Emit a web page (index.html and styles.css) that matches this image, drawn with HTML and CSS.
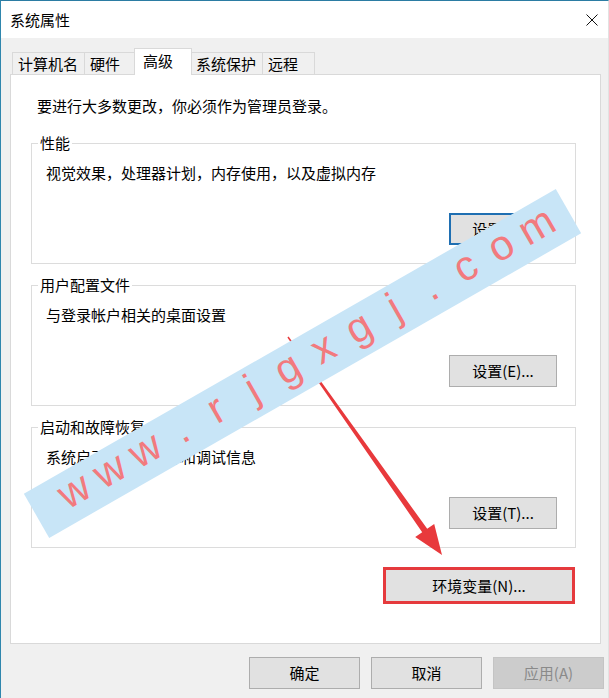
FILE: index.html
```html
<!DOCTYPE html>
<html lang="zh-CN">
<head>
  <meta charset="UTF-8" />
  <title>系统属性</title>
  <link rel="stylesheet" href="styles.css">
</head>
<body>

  <div class="window">
    <!-- 标题栏 -->
    <div class="titlebar">
      <span class="title">系统属性</span>
      <svg class="close" width="12" height="12" viewBox="0 0 12 12">
        <path d="M0.5 0.5 L11.5 11.5 M11.5 0.5 L0.5 11.5" stroke="#111" stroke-width="1" fill="none" />
      </svg>
    </div>

    <div class="content">
      <div class="tabs">
        <div class="tab">计算机名</div>
        <div class="tab">硬件</div>
        <div class="tab active">高级</div>
        <div class="tab">系统保护</div>
        <div class="tab">远程</div>
      </div>

      <div class="panel">
        <p class="note">要进行大多数更改，你必须作为管理员登录。</p>

        <fieldset class="group">
          <legend>性能</legend>
          <p class="desc">视觉效果，处理器计划，内存使用，以及虚拟内存</p>
          <div class="group-actions"><button class="btn focused">设置(S)...</button></div>
        </fieldset>

        <fieldset class="group">
          <legend>用户配置文件</legend>
          <p class="desc">与登录帐户相关的桌面设置</p>
          <div class="group-actions"><button class="btn">设置(E)...</button></div>
        </fieldset>

        <fieldset class="group">
          <legend>启动和故障恢复</legend>
          <p class="desc">系统启动、系统故障和调试信息</p>
          <div class="group-actions"><button class="btn">设置(T)...</button></div>
        </fieldset>

        <div class="env-row">
          <div class="env-mark"><button class="btn env">环境变量(N)...</button></div>
        </div>
      </div>

      <div class="footer">
        <button class="btn wide">确定</button>
        <button class="btn wide">取消</button>
        <button class="btn wide" disabled>应用(A)</button>
      </div>
    </div>

    <!-- 红色箭头 -->
    <svg class="arrow" width="609" height="698" viewBox="0 0 609 698">
      <polygon points="288.6,336.6 427.2,528.8 434.2,523.9 442,555 415.2,537.1 422.2,532.2 287.4,337.4" fill="#e8393c" />
    </svg>

    <!-- 水印 -->
    <div class="watermark">
      <span>w</span><span>w</span><span>w</span><span>.</span><span>r</span><span>j</span><span>g</span><span>x</span><span>g</span><span>j</span><span>.</span><span>c</span><span>o</span><span>m</span>
    </div>
  </div>

</body>
</html>
```

FILE: styles.css
```css
body {
  margin: 0;
  font-family: "Noto Sans CJK SC", "Noto Sans", sans-serif;
  font-size: 15px;
  color: #000;
  background: #fff;
}

p {
  margin: 0;
}

.window {
  position: relative;
  width: 609px;
  height: 698px;
  box-sizing: border-box;
  border-top: 1px solid #2b7ca3;
  border-left: 1px solid #2f86ad;
  border-right: 1px solid #e2e2e2;
  background: #f0f0f0;
  overflow: hidden;
}

.titlebar {
  height: 37px;
  background: #fff;
  display: flex;
  align-items: center;
  justify-content: space-between;
  padding: 0 10px 0 9px;
}

.title {
  line-height: 20px;
  margin-top: 1px;
}

.close {
  display: block;
  margin-top: 1px;
}

.content {
  padding: 10px 0 0 9px;
}

.tabs {
  display: flex;
  align-items: flex-end;
  height: 26px;
  padding-left: 2px;
}

.tab {
  height: 22px;
  box-sizing: border-box;
  min-width: 53px;
  padding: 0 6px 0 5px;
  border: 1px solid #d9d9d9;
  border-bottom: none;
  margin-right: -1px;
  background: #f0f0f0;
  line-height: 21px;
}

.tab.active {
  position: relative;
  z-index: 1;
  height: 27px;
  min-width: 58px;
  margin: 0 -2px -1px -2px;
  padding: 0 8px;
  background: #fff;
  line-height: 24px;
}

.panel {
  width: 591px;
  height: 570px;
  box-sizing: border-box;
  background: #fff;
  border: 1px solid #d9d9d9;
  padding: 21px 25px 0 20px;
}

.note {
  line-height: 20px;
  margin-left: 6px;
}

.group {
  width: 545px;
  box-sizing: border-box;
  margin: 17px 0 0 0;
  padding: 0 18px 18px 14px;
  border: 1px solid #dcdcdc;
}

.group + .group {
  margin-top: 11px;
}

.group legend {
  line-height: 20px;
  padding: 0 2px;
  margin-left: -8px;
}

.desc {
  line-height: 20px;
  margin-top: 10px;
}

.group-actions {
  display: flex;
  justify-content: flex-end;
  margin-top: 30px;
}

.btn {
  width: 108px;
  height: 32px;
  box-sizing: border-box;
  background: #e1e1e1;
  border: 1px solid #adadad;
  font-family: inherit;
  font-size: 15px;
  color: #000;
  padding: 0;
  line-height: 20px;
}

.btn.focused {
  border: 2px solid #1f6fb2;
}

.btn:disabled {
  background: #cccccc;
  border-color: #c4c4c4;
  color: #8a8a8a;
}

.env-row {
  display: flex;
  justify-content: flex-end;
  width: 544px;
  margin-top: 19px;
}

.env-mark {
  border: 3px solid #e53a3d;
}

.btn.env {
  display: block;
  width: 186px;
  height: 31px;
  border: none;
}

.footer {
  display: flex;
  justify-content: flex-end;
  gap: 11px;
  margin: 13px 4px 0 0;
}

.btn.wide {
  width: 111px;
}

.arrow {
  position: absolute;
  left: -1px;
  top: -1px;
  pointer-events: none;
}

.watermark {
  position: absolute;
  left: -5px;
  top: 337px;
  width: 613px;
  height: 51px;
  box-sizing: border-box;
  padding-left: 10px;
  background: #c8e5f7;
  transform: rotate(-29.8deg);
  display: flex;
  align-items: center;
  justify-content: center;
  font-family: "Liberation Sans", Arial, sans-serif;
  font-size: 42px;
  color: #f27a7e;
}

.watermark span {
  width: 41px;
  text-align: center;
  line-height: 42px;
  margin-bottom: 7px;
}
```
